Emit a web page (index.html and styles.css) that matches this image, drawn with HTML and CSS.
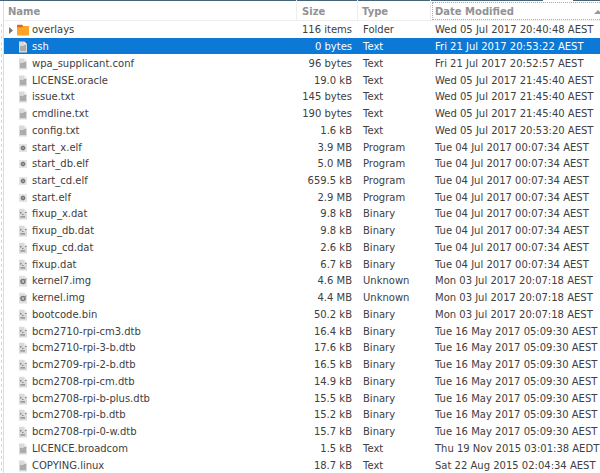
FILE: index.html
```
<!DOCTYPE html>
<html lang="en">
<head>
<meta charset="utf-8">
<title>boot</title>
<link rel="stylesheet" href="styles.css">
</head>
<body>
<svg class="symbols" aria-hidden="true">
  <symbol id="folder" viewBox="0 0 12 12"><path fill="#e0641a" d="M0 1.500Q0 .7.8.7h4.400l1.200 1.600V5H0z"/><path fill="#ffa425" d="M0 3.200h5.300l1.100-1.300h4.900q.7 0 .7.7v8.100q0 .7-.7.7H.7q-.7 0-.7-.7z"/></symbol>
  <symbol id="text" viewBox="0 0 12 12"><path fill="#dadada" d="M2 .5h5.300L10 3.300v8.200H2z"/><path fill="#f0f0f0" d="M7.300.5v2.800H10z"/><path fill="#acacac" d="M3 5h3.600V4H9v6H3z"/></symbol>
  <symbol id="program" viewBox="0 0 12 12"><path fill="#e4e4e4" d="M2 2h8v8H2z"/><path stroke="#a8a8a8" d="M4 4l4 4m0-4l-4 4M6 3v6M3 6h6"/><circle cx="6" cy="6" r="2" fill="#6a6a6a"/><circle cx="6" cy="6" r=".8" fill="#ddd"/></symbol>
  <symbol id="binary" viewBox="0 0 12 12"><path fill="#dadada" d="M2 .8h5.300L10 3.500v8H2z"/><path fill="#f0f0f0" d="M7.300.8v2.700H10z"/><path fill="#858585" d="M3 4h1.500v1.500H3zM5 6h1.500v1H5zM8 4h1.500v1H8zM3.500 8.300h4.500v1.200h-4.500z"/></symbol>
  <symbol id="image" viewBox="0 0 12 12"><path fill="#e0e0e0" d="M2 .8h5.300L10 3.500v8H2z"/><circle cx="6" cy="6.500" r="2" fill="#c9c9c9" stroke="#7b7b7b" stroke-width="1.600"/><path stroke="#8a8a8a" d="M7.500 4.700l2-.8"/></symbol>
</svg>
<div class="window">
  <div class="edge"></div>
  <main class="pane">
    <table class="files">
      <colgroup><col><col class="size"><col class="type"><col class="date"></colgroup>
      <thead><tr>
        <th class="c-name"><button type="button">Name</button></th>
        <th class="c-size"><button type="button">Size</button></th>
        <th class="c-type"><button type="button">Type</button></th>
        <th class="c-date" aria-sort="ascending"><button type="button" class="focused">Date Modified<svg class="sort" viewBox="0 0 8 4" aria-hidden="true"><path d="M0 4l4-4 4 4z"/></svg></button></th>
      </tr></thead>
      <tbody id="rows"></tbody>
    </table>
  </main>
</div>
<script src="files.js"></script>
</body>
</html>
```
FILE: styles.css
```
* { box-sizing: border-box; }

body {
  margin: 0;
  background: #fff;
  color: #404040;
  font: 10px/14px "DejaVu Sans", sans-serif;
  overflow: hidden;
}

.symbols { position: absolute; width: 0; height: 0; }

.window {
  display: flex;
  min-height: 100vh;
  background: linear-gradient(#456475 0 100%) left top / calc(100% - 57px) 1px no-repeat,
    linear-gradient(#456475 0 100%) right top / 27px 1px no-repeat;
}

.edge {
  flex: 0 0 4px;
  margin-top: 1px;
  border-right: 1px solid #dcdcdc;
  background: repeating-linear-gradient(#fff 0 3px, #d5d5d5 3px 6px) 1px 20px / 1px 100% no-repeat;
}

.pane { flex: 1; min-width: 0; }

.files {
  width: 100%;
  height: 100vh;
  table-layout: fixed;
  border-collapse: separate;
  border-spacing: 0;
  white-space: nowrap;
}

.size { width: 61px; }
.type { width: 73px; }
.date { width: 169px; }

th, td { padding: 0; text-align: left; }
th {
  height: 21px;
  padding-top: 2px;
  border-right: 1px solid #eee;
  border-bottom: 1px solid #eee;
}
th.c-date { border-right: 0; }

th button {
  display: flex;
  align-items: center;
  width: 100%;
  height: 18px;
  padding: 2px 4px 0;
  border: 0;
  background: none;
  color: #929292;
  font: inherit;
  font-weight: bold;
}
th.c-size button { padding-left: 5px; }
th .focused { padding: 2px 0 0 2px; border: 1px dotted #aaa; border-right: 0; }
.sort { width: 8px; height: 4px; margin: 0 -2px 0 auto; fill: #999; }

td { padding-top: 2px; }
td.c-size { padding-right: 6px; text-align: right; }
td.c-type { padding-left: 5px; }
td.c-date { padding-left: 4px; }
th.c-date { padding-left: 1px; }

.name { display: flex; align-items: center; }
.twist { flex: 0 0 13px; height: 7px; padding-left: 5px; fill: #777; }
.icon { width: 12px; height: 12px; margin-right: 3px; }

.selected { background: #0b79d5; color: #fff; }
```
FILE: files.js
```
const files = [
  ["folder", "overlays", "116 items", "Folder", "Wed 05 Jul 2017 20:40:48 AEST"],
  ["text", "ssh", "0 bytes", "Text", "Fri 21 Jul 2017 20:53:22 AEST"],
  ["text", "wpa_supplicant.conf", "96 bytes", "Text", "Fri 21 Jul 2017 20:52:57 AEST"],
  ["text", "LICENSE.oracle", "19.0 kB", "Text", "Wed 05 Jul 2017 21:45:40 AEST"],
  ["text", "issue.txt", "145 bytes", "Text", "Wed 05 Jul 2017 21:45:40 AEST"],
  ["text", "cmdline.txt", "190 bytes", "Text", "Wed 05 Jul 2017 21:45:40 AEST"],
  ["text", "config.txt", "1.6 kB", "Text", "Wed 05 Jul 2017 20:53:20 AEST"],
  ["program", "start_x.elf", "3.9 MB", "Program", "Tue 04 Jul 2017 00:07:34 AEST"],
  ["program", "start_db.elf", "5.0 MB", "Program", "Tue 04 Jul 2017 00:07:34 AEST"],
  ["program", "start_cd.elf", "659.5 kB", "Program", "Tue 04 Jul 2017 00:07:34 AEST"],
  ["program", "start.elf", "2.9 MB", "Program", "Tue 04 Jul 2017 00:07:34 AEST"],
  ["binary", "fixup_x.dat", "9.8 kB", "Binary", "Tue 04 Jul 2017 00:07:34 AEST"],
  ["binary", "fixup_db.dat", "9.8 kB", "Binary", "Tue 04 Jul 2017 00:07:34 AEST"],
  ["binary", "fixup_cd.dat", "2.6 kB", "Binary", "Tue 04 Jul 2017 00:07:34 AEST"],
  ["binary", "fixup.dat", "6.7 kB", "Binary", "Tue 04 Jul 2017 00:07:34 AEST"],
  ["image", "kernel7.img", "4.6 MB", "Unknown", "Mon 03 Jul 2017 20:07:18 AEST"],
  ["image", "kernel.img", "4.4 MB", "Unknown", "Mon 03 Jul 2017 20:07:18 AEST"],
  ["binary", "bootcode.bin", "50.2 kB", "Binary", "Mon 03 Jul 2017 20:07:18 AEST"],
  ["binary", "bcm2710-rpi-cm3.dtb", "16.4 kB", "Binary", "Tue 16 May 2017 05:09:30 AEST"],
  ["binary", "bcm2710-rpi-3-b.dtb", "17.6 kB", "Binary", "Tue 16 May 2017 05:09:30 AEST"],
  ["binary", "bcm2709-rpi-2-b.dtb", "16.5 kB", "Binary", "Tue 16 May 2017 05:09:30 AEST"],
  ["binary", "bcm2708-rpi-cm.dtb", "14.9 kB", "Binary", "Tue 16 May 2017 05:09:30 AEST"],
  ["binary", "bcm2708-rpi-b-plus.dtb", "15.5 kB", "Binary", "Tue 16 May 2017 05:09:30 AEST"],
  ["binary", "bcm2708-rpi-b.dtb", "15.2 kB", "Binary", "Tue 16 May 2017 05:09:30 AEST"],
  ["binary", "bcm2708-rpi-0-w.dtb", "15.7 kB", "Binary", "Tue 16 May 2017 05:09:30 AEST"],
  ["text", "LICENCE.broadcom", "1.5 kB", "Text", "Thu 19 Nov 2015 03:01:38 AEDT"],
  ["text", "COPYING.linux", "18.7 kB", "Text", "Sat 22 Aug 2015 02:04:34 AEST"],
];

document.getElementById("rows").innerHTML = files.map(([icon, name, size, type, date]) => `
  <tr${name === "ssh" ? ' class="selected"' : ""}>
    <td class="c-name"><div class="name">
      <svg class="twist" viewBox="0 0 8 7">${icon === "folder" ? '<path d="M0 0l4 3.500L0 7z"/>' : ""}</svg>
      <svg class="icon"><use href="#${icon}"/></svg><span>${name}</span>
    </div></td>
    <td class="c-size">${size}</td><td class="c-type">${type}</td><td class="c-date">${date}</td>
  </tr>`).join("");
```
